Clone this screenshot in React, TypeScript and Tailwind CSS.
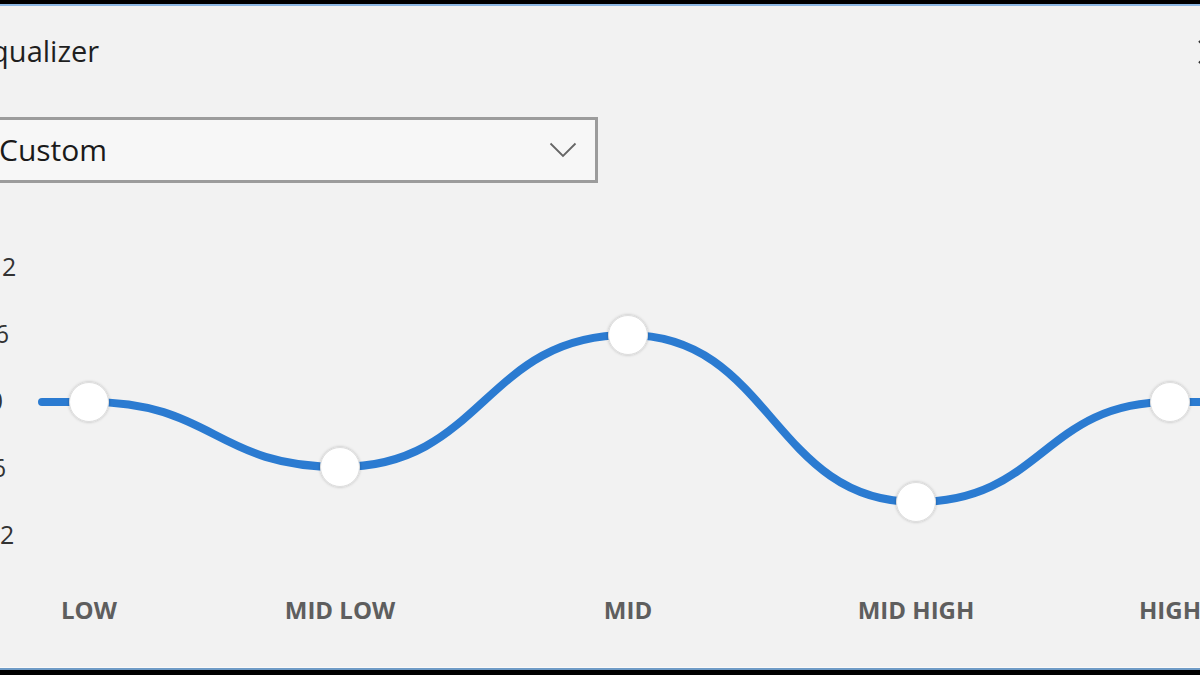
import React from "react";

const knobs = [
  { x: 89, y: 402 },
  { x: 340, y: 467 },
  { x: 628, y: 335 },
  { x: 916, y: 502 },
  { x: 1170, y: 402 },
];

const buildCurve = () => {
  let d = `M 42 402 L ${knobs[0].x} ${knobs[0].y}`;
  for (let i = 1; i < knobs.length; i++) {
    const a = knobs[i - 1];
    const b = knobs[i];
    const k = (b.x - a.x) * 0.5;
    d += ` C ${a.x + k} ${a.y}, ${b.x - k} ${b.y}, ${b.x} ${b.y}`;
  }
  d += ` L 1220 402`;
  return d;
};

const EqualizerCurve = () => (
  <svg
    width="1185"
    height="340"
    viewBox="15 230 1185 340"
    className="block shrink-0"
  >
    <defs>
      <filter id="knobShadow" x="-30%" y="-30%" width="160%" height="160%">
        <feDropShadow dx="0" dy="0" stdDeviation="1.4" floodColor="#000" floodOpacity="0.25" />
      </filter>
    </defs>
    <path
      d={buildCurve()}
      fill="none"
      stroke="#2b7bd1"
      strokeWidth="8"
      strokeLinecap="round"
    />
    {knobs.map((k) => (
      <circle
        key={k.x}
        cx={k.x}
        cy={k.y}
        r="19.5"
        fill="#ffffff"
        stroke="#dedede"
        strokeWidth="1"
        filter="url(#knobShadow)"
      />
    ))}
  </svg>
);

export default function App() {
  return (
    <div className="w-[1200px] h-[675px] overflow-hidden bg-[#f2f2f2] flex flex-col font-['Open_Sans',sans-serif]">
      <div className="h-[4px] bg-black shrink-0" />
      <div className="h-[2px] bg-[#8db7e3] shrink-0" />

      <div className="flex-1 flex flex-col">
        <div className="flex items-start justify-between mt-[25px]">
          <h1 className="-ml-[25px] text-[29px] leading-[40px] text-[#1f1f1f] font-normal">
            Equalizer
          </h1>
          <svg width="24" height="24" viewBox="0 0 24 24" className="mt-[9px] -mr-[22px]">
            <path d="M1 1 L23 23 M1 23 L23 1" stroke="#333" strokeWidth="2.2" />
          </svg>
        </div>

        <div className="mt-[46px] -ml-[32px] w-[630px] h-[66px] border-[3px] border-[#9c9c9c] bg-[#f7f7f7] flex items-center justify-between pl-[28px] pr-[18px]">
          <span className="text-[30px] leading-[40px] text-[#1a1a1a]">Custom</span>
          <svg width="28" height="16" viewBox="0 0 28 16">
            <path d="M1.5 1.5 L14 14 L26.5 1.5" fill="none" stroke="#666" strokeWidth="1.8" />
          </svg>
        </div>

        <div className="mt-[47px] flex h-[340px]">
          <div className="-ml-[11px] w-[26px] shrink-0 pt-[3px] flex flex-col text-[25px] text-[#333] text-center">
            <div className="h-[67px] flex items-center justify-center">12</div>
            <div className="h-[67px] flex items-center justify-center">6</div>
            <div className="h-[67px] flex items-center justify-center pr-[12px]">0</div>
            <div className="h-[67px] flex items-center justify-center pr-[14px]">-6</div>
            <div className="h-[67px] flex items-center justify-center pr-[12px]">-12</div>
          </div>
          <EqualizerCurve />
        </div>

        <div className="mt-[23px] flex text-[24px] leading-[34px] font-bold text-[#5e5e5e] whitespace-nowrap">
          <div className="shrink-0 ml-[9px] w-[160px] text-center">LOW</div>
          <div className="shrink-0 ml-[91px] w-[160px] text-center">MID LOW</div>
          <div className="shrink-0 ml-[128px] w-[160px] text-center">MID</div>
          <div className="shrink-0 ml-[128px] w-[160px] text-center">MID HIGH</div>
          <div className="shrink-0 ml-[94px] w-[160px] text-center">HIGH</div>
        </div>
      </div>

      <div className="h-[1px] bg-[#f9f9f9] shrink-0" />
      <div className="h-[2px] bg-[#6f9bc6] shrink-0" />
      <div className="h-[5px] bg-black shrink-0" />
    </div>
  );
}
